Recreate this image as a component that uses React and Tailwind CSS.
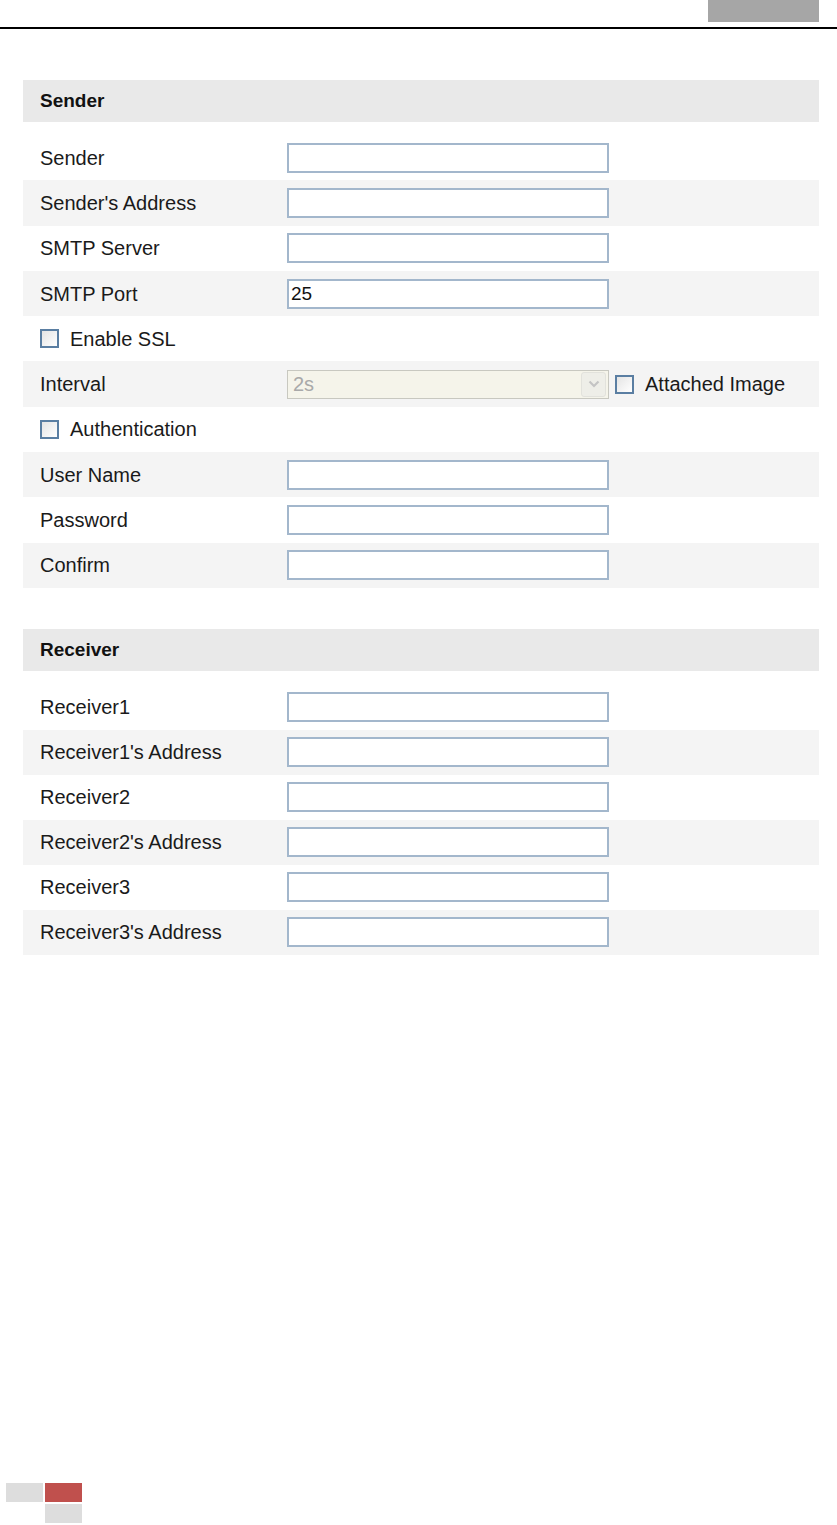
import React from 'react';

const font = { fontFamily: '"Liberation Sans", Arial, sans-serif' };

const TextInput = ({ value = '' }) => (
  <input
    type="text"
    defaultValue={value}
    className="w-[322px] h-[30px] border-2 border-[#a3b7cc] bg-white px-[2px] text-[19px] text-[#111] outline-none"
    style={font}
  />
);

const Check = () => (
  <span className="inline-block w-[19px] h-[19px] border-2 border-[#5a7ea2] bg-gradient-to-br from-[#e4e4e4] to-white" />
);

const Row = ({ label, shade, h = 'h-[45.3px]', children }) => (
  <div className={`flex items-center ${h} ${shade ? 'bg-[#f4f4f4]' : 'bg-white'}`}>
    {label !== undefined && <div className="w-[264px] pl-[17px] shrink-0">{label}</div>}
    {children}
  </div>
);

const CheckRow = ({ label, shade }) => (
  <Row shade={shade}>
    <div className="flex items-center gap-[11px] pl-[17px]">
      <Check />
      <span>{label}</span>
    </div>
  </Row>
);

const Header = ({ title }) => (
  <div className="h-[42px] bg-[#e9e9e9] flex items-center pl-[17px] font-bold text-[19px] text-[#111]">
    {title}
  </div>
);

const receivers = [
  'Receiver1',
  "Receiver1's Address",
  'Receiver2',
  "Receiver2's Address",
  'Receiver3',
  "Receiver3's Address",
];

export default function App() {
  return (
    <div className="min-h-[1525px] w-[837px] bg-white flex flex-col text-[20px] text-[#1a1a1a]" style={font}>
      {/* top bar */}
      <div className="flex justify-end pr-[18px]">
        <div className="w-[111px] h-[22px] bg-[#a6a6a6]" />
      </div>
      <div className="mt-[5px] h-[2px] bg-black" />

      <div className="ml-[23px] mr-[18px] mt-[51px]">
        <Header title="Sender" />
        <div className="mt-[13px]">
          <Row label="Sender"><TextInput /></Row>
          <Row label="Sender's Address" shade><TextInput /></Row>
          <Row label="SMTP Server"><TextInput /></Row>
          <Row label="SMTP Port" shade><TextInput value="25" /></Row>
          <CheckRow label="Enable SSL" />
          <Row label="Interval" shade>
            <div className="w-[322px] h-[29px] border border-[#c8c8c0] bg-[#f5f4ea] flex items-center justify-between pl-[5px] pr-[2px]">
              <span className="text-[#a9a9a9]">2s</span>
              <span className="w-[25px] h-[25px] rounded-[3px] border border-[#e2e2dc] bg-[#eeeee8] flex items-center justify-center">
                <svg width="12" height="8" viewBox="0 0 12 8">
                  <path d="M1.5 1.5 L6 6 L10.5 1.5" fill="none" stroke="#c4c4c4" strokeWidth="2.2" />
                </svg>
              </span>
            </div>
            <div className="flex items-center gap-[11px] ml-[6px]">
              <Check />
              <span>Attached Image</span>
            </div>
          </Row>
          <CheckRow label="Authentication" />
          <Row label="User Name" shade><TextInput /></Row>
          <Row label="Password"><TextInput /></Row>
          <Row label="Confirm" shade><TextInput /></Row>
        </div>

        <div className="mt-[41px]">
          <Header title="Receiver" />
          <div className="mt-[14px]">
            {receivers.map((r, i) => (
              <Row key={r} label={r} shade={i % 2 === 1} h="h-[45px]">
                <TextInput />
              </Row>
            ))}
          </div>
        </div>
      </div>

      {/* footer page marks */}
      <div className="mt-auto pl-[6px] pb-[2px] flex flex-col gap-[2px]">
        <div className="flex gap-[2px]">
          <div className="w-[37px] h-[19px] bg-[#dddddd]" />
          <div className="w-[37px] h-[19px] bg-[#c0504d]" />
        </div>
        <div className="flex gap-[2px]">
          <div className="w-[37px] h-[19px]" />
          <div className="w-[37px] h-[19px] bg-[#dddddd]" />
        </div>
      </div>
    </div>
  );
}
